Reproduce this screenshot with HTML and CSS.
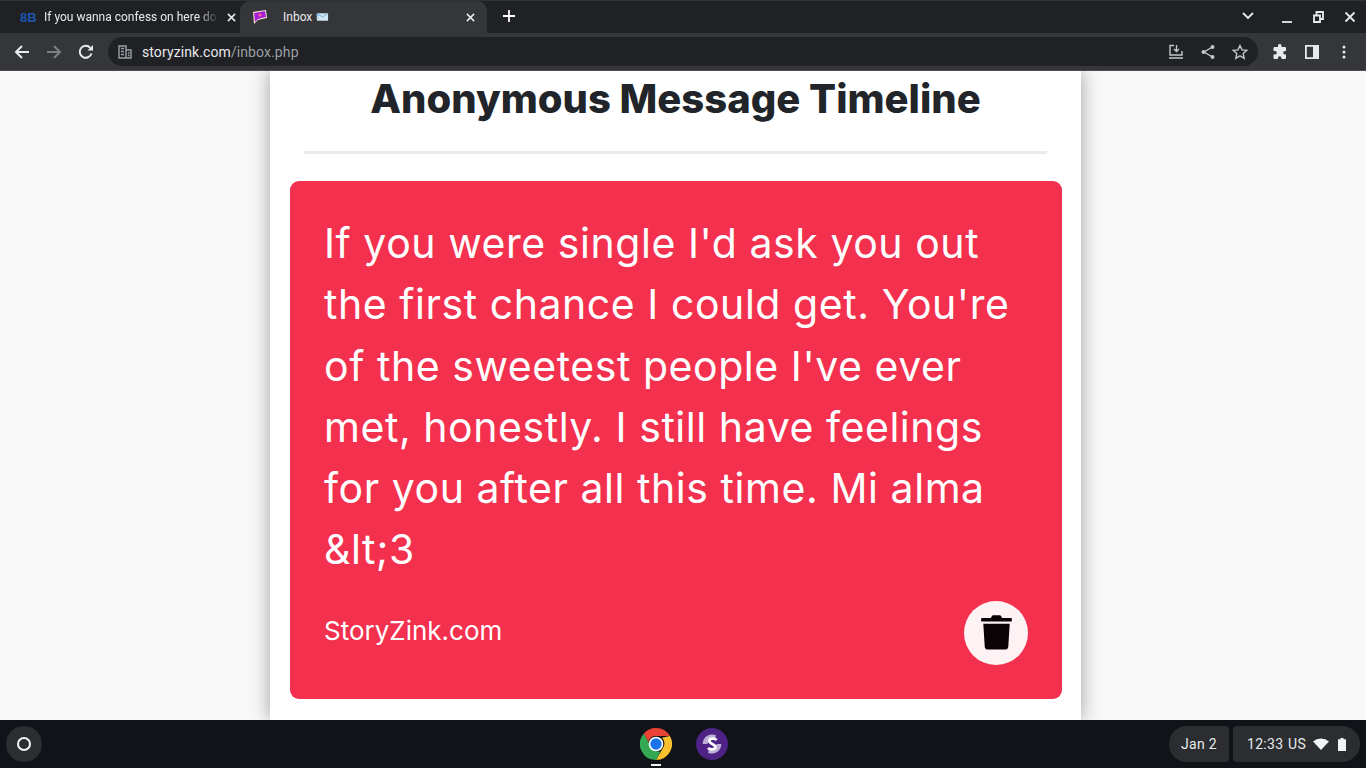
FILE: index.html
```html
<!DOCTYPE html>
<html lang="en">
<head>
    <meta charset="UTF-8">
    <meta name="viewport" content="width=device-width, initial-scale=1.0">
    <title>Inbox</title>
    <link rel="stylesheet" href="styles.css">
</head>
<body>
    <div class="tabstrip">
        <div class="tab">
            <span class="favicon-bb">8B</span>
            <span class="tab-title">If you wanna confess on here do</span>
            <svg class="tab-close" viewBox="0 0 10 10"><path d="M1 1l8 8M9 1l-8 8"/></svg>
        </div>
        <div class="tab active">
            <svg class="favicon" viewBox="0 0 16 16">
                <path d="M1 3l13-2 1 8-9 2-4 4z" fill="#f4e9c8"/>
                <path d="M2 4l11-2 1 6-8 2-3 3z" fill="#a81fd8"/>
                <circle cx="8" cy="6" r="1.6" fill="#ef5fa0"/>
            </svg>
            <span class="tab-title">Inbox
                <svg class="mail" viewBox="0 0 14 10">
                    <rect x="1" y="1" width="12" height="8" fill="#d5e6f3"/>
                    <path d="M1 1l6 4 6-4" fill="none" stroke="#6fa8d8" stroke-width="1"/>
                    <path d="M0 3h3M0 6h3" stroke="#6fa8d8" stroke-width="1"/>
                </svg>
            </span>
            <svg class="tab-close" viewBox="0 0 10 10"><path d="M1 1l8 8M9 1l-8 8"/></svg>
        </div>
        <svg class="new-tab" viewBox="0 0 12 12"><path d="M6 0v12M0 6h12"/></svg>
        <div class="window-btns">
            <svg class="win-icon chevron" viewBox="0 0 12 8"><path d="M1 1l5 5 5-5"/></svg>
            <svg class="win-icon minimize" viewBox="0 0 12 12"><path d="M2 11h10"/></svg>
            <svg class="win-icon restore" viewBox="0 0 12 12"><path d="M2 4.500h6v6.500H2zM4.500 4V1H11v7H8.500"/></svg>
            <svg class="win-icon close" viewBox="0 0 12 12"><path d="M1.500 1.500l9 9M10.500 1.500l-9 9"/></svg>
        </div>
    </div>

    <div class="toolbar">
        <svg class="nav-icon" viewBox="0 0 16 16"><path d="M15 8H2M8 2L2 8l6 6"/></svg>
        <svg class="nav-icon disabled" viewBox="0 0 16 16"><path d="M1 8h13M8 2l6 6-6 6"/></svg>
        <svg class="nav-icon" viewBox="0 0 16 16"><path d="M13.500 9.500A6 6 0 1 1 12.300 3.800"/><path class="solid" d="M9.500 6.500H15V1z"/></svg>
        <div class="omnibox">
            <svg class="site-icon" viewBox="0 0 14 14"><path d="M1 1h7v12H1zM8 5h5v8H8z" fill="none" stroke="#9aa0a6" stroke-width="1.400"/><path d="M3 3.500h3M3 6.500h3M3 9.500h3M10 8h1.500M10 10.500h1.500" stroke="#9aa0a6" stroke-width="1.400"/></svg>
            <span class="url">storyzink.com<span class="url-path">/inbox.php</span></span>
            <svg class="omni-icon" viewBox="0 0 16 16"><path d="M6 1.500H2v9.500h12V7M8.500 1v6M6 5l2.500 2.500L11 5M1 14h14"/></svg>
            <svg class="omni-icon" viewBox="0 0 16 16"><path d="M12.500 3L4 8l8.500 5"/><circle class="solid" cx="12.500" cy="3" r="2"/><circle class="solid" cx="3.500" cy="8" r="2"/><circle class="solid" cx="12.500" cy="13" r="2"/></svg>
            <svg class="omni-icon" viewBox="0 0 16 16"><path d="M8 1.500l2 4.400 4.700.5-3.500 3.200 1 4.700L8 11.900l-4.200 2.400 1-4.700L1.300 6.400 6 5.900z"/></svg>
        </div>
        <svg class="tool-icon" viewBox="0 0 16 16"><path d="M6 1.500a1.800 1.800 0 0 1 3.500 0V3H13a1 1 0 0 1 1 1v3h-1a1.800 1.800 0 0 0 0 3.600h1V14a1 1 0 0 1-1 1H9.500v-1a1.800 1.800 0 0 0-3.600 0v1H2.500a1 1 0 0 1-1-1v-3.400H3A1.800 1.800 0 0 0 3 7H1.500V4a1 1 0 0 1 1-1H6z"/></svg>
        <svg class="tool-icon" viewBox="0 0 16 16"><path fill-rule="evenodd" d="M1 1h14v14H1zM2.800 2.800v10.400H9V2.800z"/></svg>
        <svg class="tool-icon" viewBox="0 0 16 16"><circle cx="8" cy="3" r="1.500"/><circle cx="8" cy="8" r="1.500"/><circle cx="8" cy="13" r="1.500"/></svg>
    </div>

    <div class="page">
        <div class="column">
            <h1 class="heading">Anonymous Message Timeline</h1>
            <hr class="rule">
            <div class="card">
                <p class="message">If you were single I'd ask you out the first chance I could get. You're of the sweetest people I've ever met, honestly. I still have feelings for you after all this time. Mi alma &amp;lt;3</p>
                <div class="card-footer">
                    <span class="brand">StoryZink.com</span>
                    <button class="delete-btn">
                        <svg viewBox="0 0 30 34"><path d="M1 5.500c0-.8.500-1.200 1.200-1.200H10l.8-1.800c.3-.5.700-.8 1.300-.8h5.800c.600 0 1 .3 1.300.8l.8 1.800h7.800c.7 0 1.200.4 1.200 1.200v1.200c0 .4-.3.700-.7.700H1.700c-.4 0-.7-.3-.7-.7z"/><path d="M3 9.500h24l-1.300 20.800c-.1 1.500-1.300 2.700-2.800 2.700H7.100c-1.500 0-2.700-1.200-2.800-2.700z"/></svg>
                    </button>
                </div>
            </div>
        </div>
    </div>

    <div class="shelf">
        <div class="launcher"><span class="launcher-ring"></span></div>
        <div class="shelf-apps">
            <div class="app running">
                <svg class="app-icon" viewBox="0 0 48 48">
                    <path d="M24 0a24 24 0 0 1 20.800 12H24a12 12 0 0 0-11.500 8.500L5.500 8.500A24 24 0 0 1 24 0z" fill="#ea4335"/>
                    <path d="M44.800 12A24 24 0 0 1 24 48l10.400-18A12 12 0 0 0 33 14.500z" fill="#fbc02d"/>
                    <path d="M5.500 8.500L15.900 26.500A12 12 0 0 0 31 34.800L24 48A24 24 0 0 1 5.500 8.500z" fill="#34a853"/>
                    <circle cx="24" cy="24" r="11" fill="#fff"/>
                    <circle cx="24" cy="24" r="8.500" fill="#1a73e8"/>
                </svg>
            </div>
            <div class="app">
                <svg class="app-icon" viewBox="0 0 48 48">
                    <circle cx="24" cy="24" r="24" fill="#4f2285"/>
                    <path d="M10 24A14 14 0 0 1 30 11l-2 7a8 8 0 0 0-11 6zM38 24A14 14 0 0 1 18 37l2-7a8 8 0 0 0 11-6z" fill="#bfaed6"/>
                    <path d="M31 18c-3-3-11-3-11 1.500 0 4.500 9 4.500 9 9 0 4.500-8 4.500-11 1.500" fill="none" stroke="#fff" stroke-width="4"/>
                </svg>
            </div>
        </div>
        <div class="tray">
            <div class="tray-pill date">Jan 2</div>
            <div class="tray-pill status">
                <span class="clock">12:33</span>
                <span class="locale">US</span>
                <svg class="wifi" viewBox="0 0 16 12"><path d="M0 3.500a12 12 0 0 1 16 0L8 12z"/></svg>
                <svg class="battery" viewBox="0 0 8 13"><path d="M2.500 0h3v1.200H8V13H0V1.200h2.500z"/></svg>
            </div>
        </div>
    </div>
</body>
</html>
```

FILE: styles.css
```css
* {
    box-sizing: border-box;
}
body {
    margin: 0;
    height: 768px;
    overflow: hidden;
    display: flex;
    flex-direction: column;
    font-family: "Roboto", "Liberation Sans", sans-serif;
    background-color: #f8f8f8;
}

/* tabs */
.tabstrip {
    height: 33px;
    flex: none;
    display: flex;
    background-color: #202124;
    border-top: 1px solid #303134;
    color: #e8eaed;
    font-size: 12px;
}
.tab {
    width: 240px;
    padding: 0 2px 0 20px;
    display: flex;
    align-items: center;
    gap: 8px;
}
.tab.active {
    width: 247px;
    padding: 0 10px 0 12px;
    background-color: #35363a;
    border-radius: 10px 10px 0 0;
}
.tab-title {
    flex: 1;
    overflow: hidden;
    white-space: nowrap;
    -webkit-mask-image: linear-gradient(to right, #000 88%, transparent);
    mask-image: linear-gradient(to right, #000 88%, transparent);
}
.tab.active .tab-title {
    margin-left: 7px;
    -webkit-mask-image: none;
    mask-image: none;
}
.favicon-bb {
    width: 16px;
    color: #1c55b0;
    font-size: 13px;
    font-weight: 700;
    font-family: "Liberation Sans", sans-serif;
}
.favicon {
    width: 16px;
    height: 16px;
}
.mail {
    width: 13px;
    height: 10px;
    vertical-align: -1px;
    margin-left: 1px;
}
.tab-close {
    width: 9px;
    height: 9px;
    margin-right: 2px;
    fill: none;
    stroke: #e8eaed;
    stroke-width: 1.700;
}
.new-tab {
    width: 12px;
    height: 12px;
    margin: 9px 0 0 16px;
    fill: none;
    stroke: #fff;
    stroke-width: 1.800;
}
.window-btns {
    margin-left: auto;
    display: flex;
    align-items: center;
    gap: 20px;
    padding-right: 10px;
}
.win-icon {
    width: 12px;
    height: 12px;
    fill: none;
    stroke: #e8eaed;
    stroke-width: 1.800;
}
.chevron {
    margin-right: 6px;
    height: 8px;
    margin-top: -3px;
}

/* toolbar */
.toolbar {
    height: 38px;
    flex: none;
    display: flex;
    align-items: center;
    padding: 0 14px;
    background-color: #35363a;
    border-bottom: 1px solid #4a4b4f;
}
.nav-icon {
    width: 16px;
    height: 16px;
    margin-right: 16px;
    fill: none;
    stroke: #e8eaed;
    stroke-width: 2;
}
.nav-icon.disabled {
    stroke: #7c7e82;
}
.nav-icon .solid {
    fill: #e8eaed;
    stroke: none;
}
.omnibox {
    width: 1150px;
    height: 29px;
    margin-left: -2px;
    display: flex;
    align-items: center;
    padding: 0 10px;
    background-color: #202124;
    border-radius: 15px;
}
.site-icon {
    width: 14px;
    height: 14px;
}
.url {
    flex: 1;
    margin-left: 10px;
    color: #e8eaed;
    font-size: 14px;
    letter-spacing: 0.1px;
}
.url-path {
    color: #9aa0a6;
}
.omni-icon {
    width: 16px;
    height: 16px;
    margin-left: 16px;
    fill: none;
    stroke: #c4c7c5;
    stroke-width: 1.400;
}
.omni-icon .solid {
    fill: #c4c7c5;
    stroke: none;
}
.tool-icon {
    width: 16px;
    height: 16px;
    margin-left: 16px;
    fill: #e8eaed;
}
.omnibox + .tool-icon {
    margin-left: 14px;
}

/* page */
.page {
    flex: 1;
    min-height: 0;
    overflow: hidden;
    background-color: #f8f8f8;
}
.column {
    width: 811px;
    height: 100%;
    margin-left: 270px;
    padding: 0 20px;
    background-color: #fff;
    box-shadow: 0 0 18px rgba(0, 0, 0, 0.36);
}
.heading {
    margin: 0;
    padding-top: 4px;
    text-align: center;
    font-family: "Inter", "Liberation Sans", sans-serif;
    font-size: 40px;
    line-height: 48px;
    font-weight: 800;
    color: #212529;
}
.rule {
    width: 743px;
    height: 3px;
    margin: 28px auto 27px;
    border: 0;
    background-color: #e9ecef;
}
.card {
    width: 772px;
    height: 518px;
    padding: 32px 34px 0;
    background-color: #f4304f;
    border-radius: 9px;
    color: #fff;
    font-family: "Inter", "Liberation Sans", sans-serif;
}
.message {
    margin: 0;
    font-size: 41px;
    line-height: 61.250px;
    font-weight: 400;
    letter-spacing: 0.55px;
}
.card-footer {
    margin-top: 20px;
    display: flex;
    justify-content: space-between;
    align-items: center;
}
.brand {
    font-size: 26px;
    margin-top: -4px;
}
.delete-btn {
    width: 64px;
    height: 64px;
    padding: 0;
    border: 0;
    border-radius: 50%;
    background-color: #fdf3f4;
    display: flex;
    align-items: center;
    justify-content: center;
}
.delete-btn svg {
    width: 33px;
    height: 38px;
    margin-top: -2px;
    fill: #0a0204;
}

/* shelf */
.shelf {
    height: 48px;
    flex: none;
    display: flex;
    align-items: center;
    padding: 0 6px;
    background-color: #101318;
    color: #e8eaed;
    position: relative;
}
.launcher {
    width: 36px;
    height: 36px;
    border-radius: 50%;
    background-color: #2b2d31;
    display: flex;
    align-items: center;
    justify-content: center;
}
.launcher-ring {
    width: 14px;
    height: 14px;
    border: 2px solid #f1f3f4;
    border-radius: 50%;
}
.shelf-apps {
    position: absolute;
    left: 632px;
    top: 0;
    height: 48px;
    display: flex;
    gap: 8px;
}
.app {
    width: 48px;
    height: 48px;
    display: flex;
    align-items: center;
    justify-content: center;
    position: relative;
}
.app-icon {
    width: 32px;
    height: 32px;
}
.app.running:after {
    content: '';
    position: absolute;
    left: 19px;
    bottom: 2px;
    width: 10px;
    height: 2px;
    background-color: #f1f3f4;
}
.tray {
    margin-left: auto;
    display: flex;
    gap: 4px;
}
.tray-pill {
    height: 36px;
    display: flex;
    align-items: center;
    background-color: #2b2d31;
    font-size: 14px;
    letter-spacing: 0.3px;
}
.date {
    width: 60px;
    justify-content: center;
    border-radius: 18px 4px 4px 18px;
}
.status {
    width: 127px;
    padding-left: 14px;
    border-radius: 4px 18px 18px 4px;
}
.clock {
    width: 41px;
}
.locale {
    width: 25px;
}
.wifi {
    width: 16px;
    height: 12px;
    fill: #f1f3f4;
}
.battery {
    width: 8px;
    height: 13px;
    margin-left: 9px;
    fill: #f1f3f4;
}
```
